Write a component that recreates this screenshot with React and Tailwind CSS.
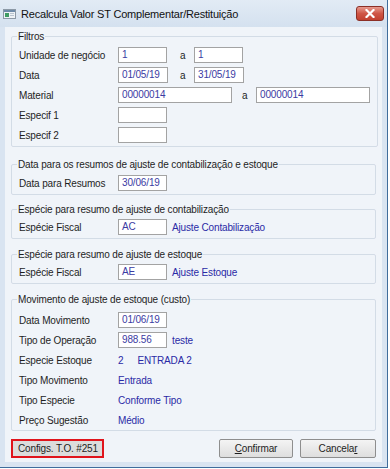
import React from "react";

const Inp = ({ w = "w-[50px]", children }) => (
  <div
    className={
      "h-[16px] border border-[#a3a3a3] bg-white text-[#3b3ba3] pl-[3px] leading-[14px] whitespace-nowrap overflow-hidden " +
      w
    }
  >
    {children}
  </div>
);

const Row = ({ label, children }) => (
  <div className="flex items-center h-[20px]">
    <div className="w-[99px] shrink-0 text-[#1e1e1e] whitespace-nowrap">{label}</div>
    {children}
  </div>
);

const Group = ({ title, children, cls = "" }) => (
  <fieldset className={"border border-[#d3dce6] rounded-[2px] px-[7px] " + cls}>
    <legend className="px-[1px] ml-[-2px] text-[#1e1e1e] leading-[13px] whitespace-nowrap">{title}</legend>
    {children}
  </fieldset>
);

const Link = ({ children, cls = "" }) => (
  <span className={"text-[#2a2aa6] whitespace-nowrap " + cls}>{children}</span>
);

const Btn = ({ children, cls = "" }) => (
  <div
    className={
      "h-[19px] border border-[#8e8e8e] rounded-[2px] bg-gradient-to-b from-[#f4f4f4] to-[#dedede] flex items-center justify-center text-[#1e1e1e] " +
      cls
    }
  >
    {children}
  </div>
);

export default function App() {
  return (
    <div className="w-[390px] h-[469px] bg-white font-['Liberation_Sans',Arial,sans-serif] text-[10px] tracking-[-0.15px]">
      <div className="w-[388px] h-[468px] bg-[#d9e4f1] border-r border-b border-[#3f6d9c] flex flex-col">
        {/* title bar */}
        <div className="h-[27px] shrink-0 flex items-center pl-[3px] pr-[3px] bg-gradient-to-b from-[#e2ebf5] to-[#d4e1ef]">
          <svg width="13" height="10" viewBox="0 0 13 10" className="shrink-0">
            <rect x="0.5" y="0.5" width="12" height="9" fill="#eef2f6" stroke="#8c99a6" />
            <rect x="1" y="1" width="11" height="2" fill="#6d8aa8" />
            <rect x="2" y="4" width="4" height="4" fill="#3f9b63" />
            <rect x="7" y="4" width="4" height="1" fill="#b9c4cf" />
            <rect x="7" y="6" width="4" height="1" fill="#b9c4cf" />
          </svg>
          <span className="ml-[5px] text-[11px] tracking-[-0.2px] text-[#111] leading-[14px] whitespace-nowrap">
            Recalcula Valor ST Complementar/Restituição
          </span>
          <div className="ml-auto mt-[-1px] w-[28px] h-[15px] rounded-[3px] border border-[#8b2f26] bg-gradient-to-b from-[#e69a8f] via-[#cf5646] to-[#c2402f] flex items-center justify-center">
            <svg width="10" height="9" viewBox="0 0 10 9">
              <path d="M1.5 1 L8.5 8 M8.5 1 L1.5 8" stroke="#ffffff" strokeWidth="2.2" strokeLinecap="square" />
            </svg>
          </div>
        </div>

        {/* body */}
        <div className="flex-1 mx-[5px] mb-[5px] bg-[#f0f4f9] px-[6px] pt-[3px] flex flex-col">
          <Group title="Filtros" cls="pt-[2px] pb-[1px]">
            <Row label="Unidade de negócio">
              <Inp w="w-[49px]">1</Inp>
              <span className="ml-[13px] w-[14px] text-[#1e1e1e]">a</span>
              <Inp w="w-[49px]">1</Inp>
            </Row>
            <Row label="Data">
              <Inp w="w-[50px]">01/05/19</Inp>
              <span className="ml-[12px] w-[14px] text-[#1e1e1e]">a</span>
              <Inp w="w-[50px]">31/05/19</Inp>
            </Row>
            <Row label="Material">
              <Inp w="w-[114px]">00000014</Inp>
              <span className="ml-[10px] w-[14px] text-[#1e1e1e]">a</span>
              <Inp w="w-[114px]">00000014</Inp>
            </Row>
            <Row label="Especif 1">
              <Inp w="w-[49px]"></Inp>
            </Row>
            <Row label="Especif 2">
              <Inp w="w-[49px]"></Inp>
            </Row>
          </Group>

          <Group title="Data para os resumos de ajuste de contabilização e estoque" cls="mt-[11px] pt-[2px] pb-[1px]">
            <Row label="Data para Resumos">
              <Inp w="w-[49px]">30/06/19</Inp>
            </Row>
          </Group>

          <Group title="Espécie para resumo de ajuste de contabilização" cls="mt-[8px] pt-[1px] pb-[1px]">
            <Row label="Espécie Fiscal">
              <Inp w="w-[49px]">AC</Inp>
              <Link cls="ml-[5px]">Ajuste Contabilização</Link>
            </Row>
          </Group>

          <Group title="Espécie para resumo de ajuste de estoque" cls="mt-[9px] pt-[1px] pb-[1px]">
            <Row label="Espécie Fiscal">
              <Inp w="w-[49px]">AE</Inp>
              <Link cls="ml-[5px]">Ajuste Estoque</Link>
            </Row>
          </Group>

          <Group title="Movimento de ajuste de estoque (custo)" cls="mt-[9px] pt-[4px] pb-[0px]">
            <Row label="Data Movimento">
              <Inp w="w-[49px]">01/06/19</Inp>
            </Row>
            <Row label="Tipo de Operação">
              <Inp w="w-[49px]">988.56</Inp>
              <Link cls="ml-[5px]">teste</Link>
            </Row>
            <Row label="Especie Estoque">
              <Link>2</Link>
              <Link cls="ml-[14px]">ENTRADA 2</Link>
            </Row>
            <Row label="Tipo Movimento">
              <Link>Entrada</Link>
            </Row>
            <Row label="Tipo Especie">
              <Link>Conforme Tipo</Link>
            </Row>
            <Row label="Preço Sugestão">
              <Link>Médio</Link>
            </Row>
          </Group>

          <div className="mt-[8px] flex items-center">
            <div className="w-[93px] h-[19px] border-[2px] border-[#e0141c] bg-[#dcdcdc] flex items-center pl-[5px] text-[#1e1e1e] leading-[13px] whitespace-nowrap">
              Configs. T.O. #251
            </div>
            <Btn cls="ml-auto w-[74px]">
              <span>
                <span className="underline">C</span>onfirmar
              </span>
            </Btn>
            <Btn cls="ml-[7px] w-[76px]">
              <span>
                Cancela<span className="underline">r</span>
              </span>
            </Btn>
          </div>
        </div>
      </div>
    </div>
  );
}
